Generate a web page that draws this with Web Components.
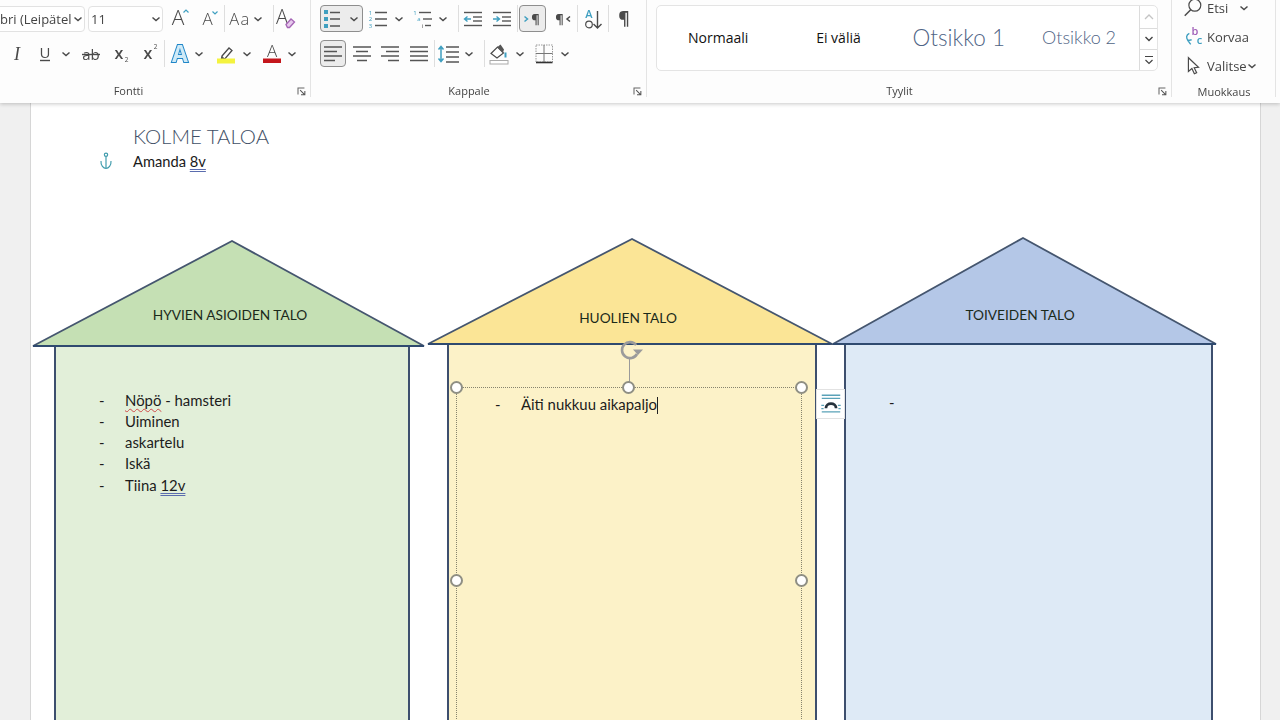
<!DOCTYPE html>
<html lang="fi">
<head>
<meta charset="utf-8">
<title>KOLME TALOA</title>
<style>
html,body{margin:0;padding:0;width:1280px;height:720px;overflow:hidden;background:#f0f0f0}
word-app{font-family:"Open Sans","Liberation Sans",sans-serif}
</style>
</head>
<body>
<word-app>
  <word-ribbon slot="ribbon">
    <rb-group label="Fontti" launcher style="width:345px;margin-left:-34px;--pad:34px">
      <rb-row>
        <rb-select w="95" style="margin-left:-10px" pad="10">bri (Leipätel</rb-select>
        <rb-select w="75" style="margin-left:3px" pad="3">11</rb-select>
        <rb-btn icon="grow" w="34"></rb-btn>
        <rb-btn icon="shrink" w="22"></rb-btn>
        <rb-sep w="10"></rb-sep>
        <rb-btn icon="case" w="22"></rb-btn>
        <rb-btn icon="chev" w="14"></rb-btn>
        <rb-sep w="16"></rb-sep>
        <rb-btn icon="clear" w="14"></rb-btn>
      </rb-row>
      <rb-row>
        <rb-btn icon="italic" w="34"></rb-btn>
        <rb-btn icon="underline" w="22"></rb-btn>
        <rb-btn icon="chev" w="20"></rb-btn>
        <rb-btn icon="strike" w="30"></rb-btn>
        <rb-btn icon="sub" w="30"></rb-btn>
        <rb-btn icon="sup" w="28"></rb-btn>
        <rb-sep w="1"></rb-sep>
        <rb-btn icon="effect" w="29"></rb-btn>
        <rb-btn icon="chev" w="10"></rb-btn>
        <rb-btn icon="highlight" w="32" style="margin-left:6px"></rb-btn>
        <rb-btn icon="chev" w="10"></rb-btn>
        <rb-btn icon="fontcolor" w="28" style="margin-left:6px"></rb-btn>
        <rb-btn icon="chev" w="10" style="margin-left:1px"></rb-btn>
      </rb-row>
    </rb-group>
    <rb-group label="Kappale" launcher style="width:336px;--pad:9px">
      <rb-row>
        <rb-btn icon="bullets" w="43" split active></rb-btn>
        <rb-btn icon="numbers" w="24" style="margin-left:3px"></rb-btn>
        <rb-btn icon="chev" w="18"></rb-btn>
        <rb-btn icon="multi" w="24" style="margin-left:4px"></rb-btn>
        <rb-btn icon="chev" w="14"></rb-btn>
        <rb-sep w="16"></rb-sep>
        <rb-btn icon="outdent" w="14"></rb-btn>
        <rb-btn icon="indent" w="28" style="margin-left:8px"></rb-btn>
        <rb-sep w="2"></rb-sep>
        <rb-btn icon="ltr" w="27" style="margin-left:1px" active></rb-btn>
        <rb-btn icon="rtl" w="30" style="margin-left:1px"></rb-btn>
        <rb-sep w="1"></rb-sep>
        <rb-btn icon="sort" w="30"></rb-btn>
        <rb-sep w="1"></rb-sep>
        <rb-btn icon="pilcrow" w="30"></rb-btn>
      </rb-row>
      <rb-row>
        <rb-btn icon="left" w="26" active></rb-btn>
        <rb-btn icon="center" w="24" style="margin-left:4px"></rb-btn>
        <rb-btn icon="right" w="24" style="margin-left:4px"></rb-btn>
        <rb-btn icon="justify" w="24" style="margin-left:5px"></rb-btn>
        <rb-sep w="1" style="margin-left:3px"></rb-sep>
        <rb-btn icon="spacing" w="24" style="margin-left:2px"></rb-btn>
        <rb-btn icon="chev" w="16"></rb-btn>
        <rb-sep w="1" style="margin-left:7px"></rb-sep>
        <rb-btn icon="shade" w="24" style="margin-left:2px"></rb-btn>
        <rb-btn icon="chev" w="18"></rb-btn>
        <rb-btn icon="borders" w="24" style="margin-left:3px"></rb-btn>
        <rb-btn icon="chev" w="18"></rb-btn>
      </rb-row>
    </rb-group>
    <rb-group label="Tyylit" launcher style="width:525px;--pad:9px">
      <style-gallery>
        <style-item style="color:#111;font-size:14px">Normaali</style-item>
        <style-item style="color:#111;font-size:14px">Ei väliä</style-item>
        <style-item style="color:#4f6485;font-size:22.5px;font-family:Lato,sans-serif;font-weight:300">Otsikko 1</style-item>
        <style-item style="color:#4f6485;font-size:18px;font-family:Lato,sans-serif;font-weight:300">Otsikko 2</style-item>
      </style-gallery>
    </rb-group>
    <rb-group label="Muokkaus" style="width:104px;--pad:11px;--top:-12px;--lb:3px">
      <rb-edit icon="search" chev="12">Etsi</rb-edit>
      <rb-edit icon="replace">Korvaa</rb-edit>
      <rb-edit icon="select" chev="1">Valitse</rb-edit>
    </rb-group>
  </word-ribbon>
  <doc-area slot="doc">
    <doc-page>
      <doc-title>KOLME TALOA</doc-title>
      <doc-para><doc-anchor></doc-anchor>Amanda <doc-mark kind="grammar">8v</doc-mark></doc-para>

      <doc-house style="left:2px;top:138px" width="391" roof="105" apex="199" body-left="21" body-width="356" roof-fill="#c5e0b4" body-fill="#e2efd9" label-x="197" label-y="73" label="HYVIEN ASIOIDEN TALO" pad-left="45" pad-top="43.5">
        <doc-item><doc-mark kind="spell">Nöpö</doc-mark> - hamsteri</doc-item>
        <doc-item>Uiminen</doc-item>
        <doc-item>askartelu</doc-item>
        <doc-item>Iskä</doc-item>
        <doc-item>Tiina <doc-mark kind="grammar">12v</doc-mark></doc-item>
      </doc-house>

      <doc-house style="left:397px;top:136px" width="404" roof="105" apex="204" body-left="19" body-width="370" roof-fill="#fbe596" body-fill="#fcf2c8" label-x="200" label-y="78" label="HUOLIEN TALO" pad-left="48" pad-top="49.5">
        <doc-item>Äiti nukkuu aikapaljo<doc-caret></doc-caret></doc-item>
      </doc-house>

      <doc-house style="left:802px;top:135px" width="383" roof="106" apex="190" body-left="11" body-width="369" roof-fill="#b4c7e7" body-fill="#deeaf6" label-x="187" label-y="76" label="TOIVEIDEN TALO" pad-left="45" pad-top="48">
        <doc-item></doc-item>
      </doc-house>

      <doc-selection></doc-selection>
      <doc-layout-btn></doc-layout-btn>
    </doc-page>
  </doc-area>
</word-app>

<script>
const INK='#4a4a4a', TEAL='#3f9fc0', SANS='Open Sans,sans-serif';
const t=(x,y,s,txt,extra='')=>`<text x="${x}" y="${y}" font-size="${s}" font-family="${SANS}" fill="${INK}" text-anchor="middle" ${extra}>${txt}</text>`;
const lines=(arr,c=INK,w=1.4)=>arr.map(([a,y,b])=>`<path d="M${a} ${y}H${b}" stroke="${c}" stroke-width="${w}"/>`).join('');
const ICONS={
  chev:`<path d="M8.500 10.500l3.500 3 3.500-3" fill="none" stroke="${INK}" stroke-width="1.500"/>`,
  grow:t(10,17.5,21,'A','font-weight="300"')+`<path d="M15.500 5.500l2.500-2.500 2.500 2.500" fill="none" stroke="${TEAL}" stroke-width="1.200"/>`,
  shrink:t(11.5,17.5,17,'A','font-weight="300"')+`<path d="M16.500 4.500l2.500 2.500 2.500-2.500" fill="none" stroke="${TEAL}" stroke-width="1.200"/>`,
  case:t(12,17.5,16.5,'Aa','letter-spacing="1.5" font-weight="300"'),
  clear:t(6,17,20,'A','font-weight="300"')+`<path d="M10 17.500l5-5.500 3.500 3-5 5.500h-2z" fill="#e6c9ec" stroke="#a565b5" stroke-width="1.300"/>`,
  italic:`<text x="12" y="18" font-size="18" font-family="Liberation Serif,serif" font-style="italic" fill="${INK}" text-anchor="middle">I</text>`,
  underline:t(12,15.5,15,'U')+lines([[7,18.5,17]]),
  strike:t(12,18,15,'ab')+lines([[3,12.5,21]]),
  sub:t(10,17,16,'x','font-weight="600"')+t(17.5,20,6.5,'2'),
  sup:t(10,17,16,'x','font-weight="600"')+t(17.5,7,6.5,'2'),
  effect:`<text x="12" y="20" font-size="23" font-weight="700" font-family="${SANS}" fill="#cfeaf7" stroke="#1f86c8" stroke-width="2" paint-order="stroke" text-anchor="middle">A</text>`,
  highlight:`<path d="M8 14l7-8 3 2.500-7 8.200-3.600.5z" fill="#fff" stroke="${INK}" stroke-width="1.300"/><path d="M8 14l3 2.700-3.600.6z" fill="#555"/><rect x="3" y="16.5" width="18" height="5" fill="#f4f33f"/>`,
  fontcolor:t(12,15,17,'A','font-weight="300"')+`<rect x="3" y="16.5" width="18" height="4.5" fill="#c4161c"/>`,
  bullets:[5,12,19].map(y=>`<rect x="4" y="${y-2}" width="4" height="4" fill="${TEAL}"/>`).join('')+lines([[10,5.5,20],[10,12,20],[10,19,20]],'#555',1.5),
  numbers:t(4.5,8,6,'1','style="fill:'+TEAL+'"')+t(4.5,14,6,'2','style="fill:'+TEAL+'"')+t(4.5,20.5,6,'3','style="fill:'+TEAL+'"')+lines([[9,5.5,21],[9,12,21],[9,18.5,21]],'#555',1.5),
  multi:t(3,7.5,6,'1','style="fill:'+TEAL+'"')+t(7,14,6,'a','style="fill:'+TEAL+'"')+t(10.5,20.5,6,'i','style="fill:'+INK+'"')+lines([[7,5.5,19],[11,12,20],[13,18.5,19]],'#555',1.4),
  outdent:lines([[3,5.5,21],[12,10,21],[12,14,21],[3,18.5,21]],'#555',1.4)+`<path d="M10 12H3.500m3-2.500L3.500 12l3 2.500" fill="none" stroke="${TEAL}" stroke-width="1.400"/>`,
  indent:lines([[3,5.5,21],[12,10,21],[12,14,21],[3,18.5,21]],'#555',1.4)+`<path d="M3 12h6.500m-3-2.500l3 2.500-3 2.500" fill="none" stroke="${TEAL}" stroke-width="1.400"/>`,
  ltr:`<path d="M3.500 9.500l3 2.500-3 2.500" fill="none" stroke="${TEAL}" stroke-width="1.500"/>`+t(14.5,16.5,13,'¶','font-weight="700"'),
  rtl:t(9.5,16.5,13,'¶','font-weight="700"')+`<path d="M20 9.500l-3 2.500 3 2.500" fill="none" stroke="${INK}" stroke-width="1.500"/>`,
  sort:`<text x="8" y="11" font-size="11" font-family="${SANS}" fill="${TEAL}" text-anchor="middle" font-weight="600">A</text><circle cx="8" cy="17.5" r="3.3" fill="none" stroke="${INK}" stroke-width="1.2"/><path d="M16.500 4v17m-4-4l4 4 4-4" fill="none" stroke="${INK}" stroke-width="1.400"/>`,
  pilcrow:t(12,18,17.5,'¶','font-weight="700"'),
  left:lines([[3,5,21],[3,9.5,16],[3,14,21],[3,18.5,14]],'#555',1.5),
  center:lines([[3,5,21],[6,9.5,18],[3,14,21],[7,18.5,17]],'#555',1.5),
  right:lines([[3,5,21],[8,9.5,21],[3,14,21],[10,18.5,21]],'#555',1.5),
  justify:lines([[3,5,21],[3,9.5,21],[3,14,21],[3,18.5,21]],'#555',1.5),
  spacing:lines([[9,5,22],[9,10,22],[9,15,22],[9,20,22]],'#555',1.5)+`<path d="M4 5v14M1.500 7.500L4 4.500l2.500 3M1.500 16.500L4 19.500l2.500-3" fill="none" stroke="${TEAL}" stroke-width="1.500"/>`,
  shade:`<path d="M4 11.500L10.500 5l6 6-6.500 5z" fill="#fff" stroke="${INK}" stroke-width="1.200"/><path d="M10.500 5l3-2.500 3.500 5-1 3z" fill="#555"/><path d="M18.500 10.500v5" stroke="${TEAL}" stroke-width="2"/><rect x="3" y="18.5" width="18" height="3.5" fill="#fff" stroke="#aaa"/>`,
  borders:`<rect x="4" y="3" width="16.5" height="17" fill="none" stroke="#999" stroke-width="1" stroke-dasharray="1.5 1"/><path d="M12 3v17M4 11.500h16.500" stroke="#777" stroke-width="1"/><path d="M4 20.500h16.500" stroke="#333" stroke-width="1.600"/>`,
  search:`<circle cx="14" cy="9" r="6.500" fill="none" stroke="${INK}" stroke-width="1.300"/><path d="M9.500 14L3 20.500" stroke="${INK}" stroke-width="1.600"/>`,
  replace:`<text x="14" y="10" font-size="12" font-family="${SANS}" fill="#a160b8" text-anchor="middle" font-weight="600">b</text><text x="19" y="20" font-size="12" font-family="${SANS}" fill="${TEAL}" text-anchor="middle" font-weight="600">c</text><path d="M8 8c-3.500 1.500-4 5.500-1 8m2.500 4l-3-4 4-1" fill="none" stroke="${TEAL}" stroke-width="1.500"/>`,
  select:`<path d="M7 3v15l3.800-3.200 2.700 5.700 2.500-1.200-2.700-5.500 4.700-.4z" fill="#fff" stroke="${INK}" stroke-width="1.300"/>`,
  launcher:`<path d="M3.500 11V3.500H11" fill="none" stroke="#666" stroke-width="1.200"/><path d="M6 6l5.500 5.500M11.500 7v4.500H7" fill="none" stroke="#555" stroke-width="1.200"/>`,
  anchor:`<circle cx="12" cy="4.500" r="2" fill="none" stroke="#3f9bac" stroke-width="1.400"/><path d="M12 6.500V21M6 12c-.5 5.500 3 9 6 9s6.500-3.500 6-9" fill="none" stroke="#3f9bac" stroke-width="1.400"/>`,
  layout:`<path d="M3 3.500h20M3 7h20M3 21.500h20" stroke="#5aa2b8" stroke-width="1.400"/><path d="M2.500 14.500h3M20.500 14.500h3M2.500 18h2.500M21 18h2.500" stroke="#5aa2b8" stroke-width="1.200"/><path d="M7.500 17.500c0-6.500 11-6.500 11 0" fill="none" stroke="#26323c" stroke-width="3"/>`
};
function icon(name,size=24,vb=24){return `<svg width="${size}" height="${size}" viewBox="0 0 ${vb} ${vb}" aria-hidden="true" style="display:block;flex:none;overflow:visible">${ICONS[name]}</svg>`}
function def(name,render){
  customElements.define(name,class extends HTMLElement{
    connectedCallback(){ if(!this.shadowRoot){const r=this.attachShadow({mode:'open'});r.innerHTML=render(this)} }
  });
}
def('word-app',()=>`<style>:host{display:flex;flex-direction:column;width:1280px;height:720px;overflow:hidden;position:relative;filter:blur(.3px)}
::slotted(word-ribbon){position:relative;z-index:2}</style><slot name="ribbon"></slot><slot name="doc"></slot>`);
def('word-ribbon',()=>`<style>:host{display:flex;flex:none;height:103px;background:#fdfdfd;box-shadow:0 1px 4px rgba(0,0,0,.22);color:#333}</style><slot></slot>`);
def('rb-group',el=>{const lab=el.getAttribute('label'),lau=el.hasAttribute('launcher');return `<style>
:host{display:flex;flex-direction:column;flex:none;box-sizing:border-box;height:103px;position:relative}
:host::after{content:"";position:absolute;right:0;top:0;height:97px;width:1px;background:#e4e4e4}
.c{display:flex;flex-direction:column;gap:8px;margin-top:var(--top,0px);padding:5px 0 0 var(--pad,0);flex:1;min-height:0}
.l{display:grid;grid-template-columns:1fr ${lau?'20px':'0'};align-items:center;height:16px;margin-bottom:var(--lb,4px)}
.t{text-align:center;font-size:11px;color:#444;line-height:16px}
.k{display:flex;justify-content:center}
</style><div class="c"><slot></slot></div><div class="l"><div class="t">${lab}</div>${lau?`<div class="k">${icon('launcher',12,14)}</div>`:''}</div>`});
def('rb-row',()=>`<style>:host{display:flex;align-items:center;height:27px;flex:none}</style><slot></slot>`);
def('rb-select',el=>`<style>:host{display:flex;flex:none;align-items:center;box-sizing:border-box;width:${el.getAttribute('w')}px;height:26px;border:1px solid #e2e2e2;border-radius:4px;background:#fff;padding-left:${el.getAttribute('pad')-1}px;font-size:13px;color:#444;white-space:nowrap;overflow:hidden}
.t{flex:1;min-width:0;overflow:hidden}.c{margin:0 -6px 0 -6px}</style><span class="t"><slot></slot></span><span class="c">${icon('chev')}</span>`);
def('rb-sep',el=>`<style>:host{display:flex;justify-content:center;flex:none;width:${el.getAttribute('w')}px;height:27px;align-self:center}i{display:block;width:1px;background:#dedede;height:100%}</style><i></i>`);
def('rb-btn',el=>{const w=+el.getAttribute('w'),a=el.hasAttribute('active'),s=el.hasAttribute('split');return `<style>:host{display:flex;flex:none;align-items:center;justify-content:${s?'flex-start':'center'};box-sizing:border-box;width:${w}px;height:27px;${a?'background:#ececec;border:1.5px solid #8e8e8e;border-radius:4px;':''}}
.d{margin-left:-2px}</style>${s?`<span style="margin-left:-1px">${icon(el.getAttribute('icon'))}</span><span class="d">${icon('chev')}</span>`:icon(el.getAttribute('icon'))}`});
def('style-gallery',()=>`<style>:host{display:flex;box-sizing:border-box;width:502px;height:66px;border:1px solid #e4e4e4;border-radius:5px;background:#fff}
.i{flex:1;display:flex;padding-left:1px}.s{width:17px;flex:none;border-left:1px solid #dcdcdc;display:flex;flex-direction:column}
.s div{display:flex;align-items:center;justify-content:center}
.s div+div{border-top:1px solid #dcdcdc}</style><div class="i"><slot></slot></div><div class="s">
<div style="height:22px"><svg width="10" height="8"><path d="M1 6l4-4 4 4" fill="none" stroke="#c4c4c4" stroke-width="1.300"/></svg></div>
<div style="height:20px"><svg width="10" height="8"><path d="M1.500 2l3.500 3.500 3.500-3.500" fill="none" stroke="#444" stroke-width="1.400"/></svg></div>
<div style="flex:1"><svg width="10" height="10"><path d="M1 1.500h8M1.500 5l3.500 3.500L8.500 5" fill="none" stroke="#444" stroke-width="1.200"/></svg></div></div>`);
def('style-item',()=>`<style>:host{display:flex;box-sizing:border-box;width:120.3px;flex:none;align-items:center;justify-content:center;white-space:nowrap;padding-bottom:2px}</style><slot></slot>`);
def('rb-edit',el=>`<style>:host{display:flex;align-items:center;flex:none;height:29px;margin-bottom:-8px;font-size:13px;color:#444}
.i{width:24px;flex:none;display:flex;margin-left:-1px;margin-right:1px}.c{margin-left:calc(${el.getAttribute('chev')||0}px - 8px)}</style>
<span class="i">${icon(el.getAttribute('icon'),22,24)}</span><slot></slot>${el.hasAttribute('chev')?`<span class="c" style="display:flex">${icon('chev',24)}</span>`:''}`);
def('doc-area',()=>`<style>:host{display:block;flex:1;min-height:0;background:#f0f0f0;padding-left:30px;overflow:hidden}</style><slot></slot>`);
def('doc-page',()=>`<style>:host{display:block;position:relative;box-sizing:border-box;width:1231px;height:700px;background:#fff;border-left:1px solid #d6d6d6;border-right:1px solid #d6d6d6;padding:21px 0 0 102px;font-family:Lato,"Liberation Sans",sans-serif;color:#1a1a1a}</style><slot></slot>`);
def('doc-title',()=>`<style>:host{display:block;font-size:20.400px;line-height:24px;color:#3f4f66;font-weight:300}</style><slot></slot>`);
def('doc-para',()=>`<style>:host{display:block;font-size:14.700px;line-height:20px;margin-top:3px;position:relative}</style><slot></slot>`);
def('doc-anchor',()=>`<style>:host{position:absolute;left:-37px;top:0;display:block}</style>${icon('anchor',20)}`);
def('doc-mark',el=>{const sp=el.getAttribute('kind')==='spell';return `<style>:host{display:inline}span{text-decoration:underline ${sp?'wavy #d04a4a 1px':'double #5a6cae 1px'};text-decoration-skip-ink:none;text-underline-offset:2px}</style><span><slot></slot></span>`});
def('doc-house',el=>{const g=k=>el.getAttribute(k),w=+g('width'),h=+g('roof'),ax=+g('apex');return `<style>
:host{position:absolute;display:block;width:${w}px;height:600px}
.roof{position:relative;height:${h}px}
svg{display:block;overflow:visible}
.lab{position:absolute;left:${g('label-x')}px;top:${g('label-y')}px;transform:translate(-50%,-50%);white-space:nowrap;font-size:13.700px;color:#1b2a1b}
.body{box-sizing:border-box;margin-left:${g('body-left')}px;width:${g('body-width')}px;height:600px;background:${g('body-fill')};border:solid #3d4f6e;border-width:0 2px;padding:${g('pad-top')}px 0 0 ${+g('pad-left')-2}px}
</style><div class="roof"><svg width="${w}" height="${h}"><polygon points="0,${h} ${ax},0 ${w},${h}" fill="${g('roof-fill')}" stroke="#45566f" stroke-width="1.800" stroke-linejoin="miter"/><path d="M0 ${h}H${w}" stroke="#2f4a6f" stroke-width="2"/></svg><div class="lab">${g('label')}</div></div><div class="body"><slot></slot></div>`});
def('doc-item',()=>`<style>:host{display:flex;font-size:14.900px;line-height:21.250px;color:#1c1c1c}.d{width:26px;flex:none}</style><span class="d">-</span><span><slot></slot></span>`);
def('doc-caret',()=>`<style>:host{display:inline-block;width:1px;height:17px;background:#222;vertical-align:-4px}</style>`);
def('doc-selection',()=>{const H=(x,y)=>`<i style="left:${x}px;top:${y}px"></i>`;return `<style>
:host{position:absolute;left:425px;top:284px;width:346px;height:386px;border:1px dotted #86846e;box-sizing:border-box;display:block}
i{position:absolute;width:13px;height:13px;margin:-7px 0 0 -7px;border:2px solid #8f8f84;border-radius:50%;background:#fff;box-sizing:border-box}
.stem{position:absolute;left:172px;top:-29px;width:1px;height:29px;background:#9a9a9a}
.rot{position:absolute;left:161px;top:-48px}
</style><div class="stem"></div><svg class="rot" width="30" height="22" viewBox="0 0 30 22"><path d="M18.200 5A8 8 0 1 0 19 14" fill="none" stroke="#9b9b9b" stroke-width="2.600"/><path d="M15 9.500h10l-5 5.500z" fill="#9b9b9b"/></svg>${H(0,0)}${H(172,0)}${H(345,0)}${H(0,193)}${H(345,193)}`});
def('doc-layout-btn',()=>`<style>:host{position:absolute;left:785px;top:286px;width:29px;height:30px;box-sizing:border-box;background:#fff;border:1px solid #e2e2e2;display:flex;align-items:center;justify-content:center}</style>${icon('layout',24,26)}`);
</script>
</body>
</html>
